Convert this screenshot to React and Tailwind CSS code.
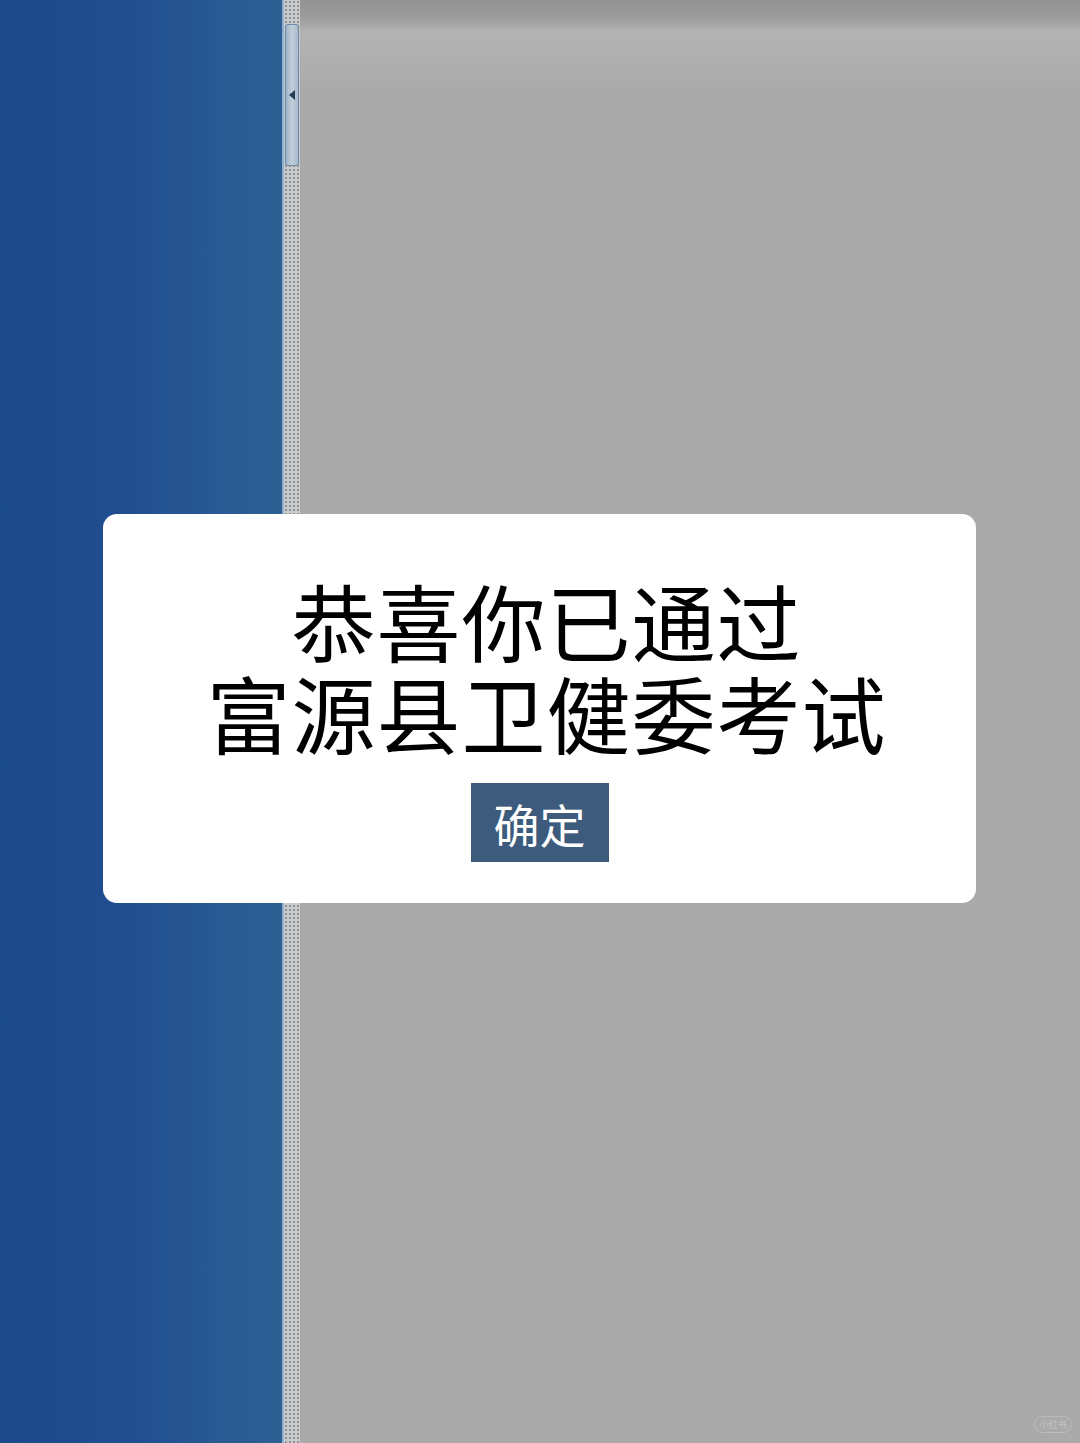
export default function App() {
  return (
    <div className="relative w-[1080px] h-[1443px] overflow-hidden flex" style={{ fontFamily: '"Noto Sans CJK SC", "Noto Sans", sans-serif' }}>
      <div className="w-[282px] h-full bg-[linear-gradient(to_right,#1b4a88_0%,#204e8f_45%,#2a5b94_80%,#2c6093_100%)]" />
      <div className="w-[2px] h-full bg-[#8fb0cf]" />
      <div className="w-[16px] h-full bg-[#c9cbcd] bg-[radial-gradient(circle,#8e9296_0.8px,transparent_1.2px)] bg-[length:4px_4px] flex flex-col pt-[24px]">
        <div className="h-[142px] mx-[1px] rounded-[3px] border border-[#6e8aa6] bg-[linear-gradient(to_right,#9fb4c8,#c2cfdb,#a6b8c9)] flex items-center justify-center">
          <div className="w-0 h-0 border-y-[5px] border-y-transparent border-r-[6px] border-r-[#233c57]" />
        </div>
      </div>
      <div className="flex-1 h-full bg-[#aaaaaa] bg-[linear-gradient(to_bottom,#939393_0px,#9c9c9c_18px,#b3b3b3_32px,#afafaf_60px,#aaaaaa_90px,#aaaaaa_100%)]" />

      <div className="absolute left-[103px] top-[514px] w-[873px] h-[389px] bg-white rounded-[14px] flex flex-col items-center pt-[60px]">
        <div className="flex flex-col items-center pl-[14px]">
          <div className="text-[84px] leading-[92px] text-black text-center tracking-[1px]">恭喜你已通过</div>
          <div className="text-[84px] leading-[92px] text-black text-center tracking-[1px]">富源县卫健委考试</div>
        </div>
        <div className="mt-[25px] w-[138px] h-[79px] bg-[#3d5b7c] flex items-center justify-center text-white text-[46px] leading-none">确定</div>
      </div>

      <div className="absolute left-[1034px] top-[1416px] w-[38px] h-[17px] rounded-full border border-[#bcbcbc] flex items-center justify-center text-[9px] leading-none text-[#c4c4c4]">小红书</div>
    </div>
  );
}
